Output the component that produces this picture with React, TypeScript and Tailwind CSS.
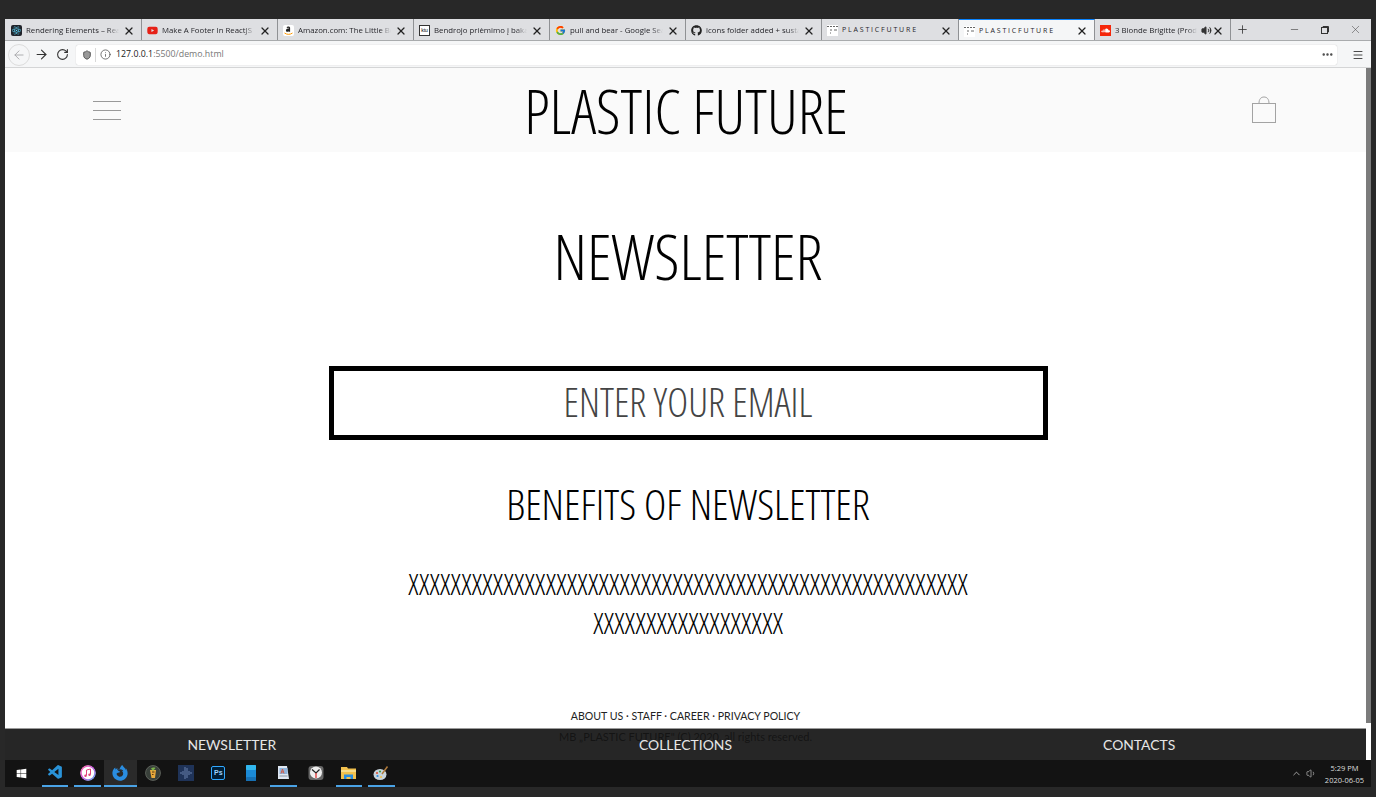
import React from 'react';
import { FaFirefoxBrowser, FaGithub, FaReact, FaSoundcloud, FaWindows, FaYoutube } from 'react-icons/fa';
import { FcGoogle } from 'react-icons/fc';
import { VscVscode } from 'react-icons/vsc';
import { ArrowLeft, ArrowRight, ChevronUp, Ellipsis, Info, Menu, Minus, Plus, RotateCw, Shield, Volume1, Volume2, X } from 'lucide-react';

const narrow = 'font-["Open_Sans",sans-serif] font-light [font-stretch:75%]';

const PlasticIcon = () => (
  <svg width="11" height="11" viewBox="0 0 11 11" className="shrink-0">
    <rect width="11" height="11" fill="#fff" />
    <path d="M0 1.5h2M3 1.5h2M6 1.5h2M9 1.5h2M7 5h3M3 5h2M3 8h1" stroke="#666" strokeWidth="1" />
  </svg>
);

const AmazonIcon = () => (
  <svg width="11" height="11" viewBox="0 0 11 11">
    <rect width="11" height="11" rx="2" fill="#fff" />
    <path d="M3.5 2.2c.5-.9 3.5-1 3.6.6v4h-1.200v-.6c-.8 1-3 .9-3-.8 0-1.500 1.700-1.800 3-1.800 0-1.300-1.300-1.100-1.500-.5z" fill="#222" />
    <path d="M1.500 8c2.500 1.800 5.500 1.800 8 0" stroke="#f90" strokeWidth="1" fill="none" />
  </svg>
);

const MusicIcon = () => (
  <svg width="16" height="16" viewBox="0 0 16 16">
    <defs>
      <linearGradient id="itunes-ring" x1="0" y1="0" x2="1" y2="1">
        <stop offset="0" stopColor="#ff6aa5" />
        <stop offset="0.5" stopColor="#c65be0" />
        <stop offset="1" stopColor="#5aa8f0" />
      </linearGradient>
    </defs>
    <circle cx="8" cy="8" r="7.500" fill="#fff" />
    <circle cx="8" cy="8" r="7" fill="none" stroke="url(#itunes-ring)" strokeWidth="1.500" />
    <path d="M6.500 10.500V5l4-1v5.500" stroke="#e0457b" strokeWidth="1" fill="none" />
    <circle cx="5.500" cy="10.800" r="1.200" fill="#e0457b" />
    <circle cx="9.500" cy="9.800" r="1.200" fill="#e0457b" />
  </svg>
);

const FruityIcon = () => (
  <svg width="16" height="16" viewBox="0 0 16 16">
    <circle cx="8" cy="8" r="7.500" fill="#39403a" stroke="#8a8f86" strokeWidth="0.500" />
    <path d="M5 5h6l-1 8H6.500z" fill="#e8a93c" />
    <path d="M6 3.500c1-1.200 3-1.200 4.500-.5L8 6z" fill="#7bb24a" />
    <path d="M7 7h2.500M7 9.500h1.500" stroke="#5b3a12" strokeWidth="1" />
  </svg>
);

const WaveIcon = () => (
  <svg width="16" height="16" viewBox="0 0 16 16">
    <rect width="16" height="16" fill="#1f3358" />
    <path d="M3 7v2M5 6v4M7 2v12M9 3v10M11 6v4M13 7v2" stroke="#7e97c4" strokeWidth="0.800" />
  </svg>
);

const PhoneIcon = () => (
  <svg width="10" height="16" viewBox="0 0 10 16">
    <rect width="10" height="16" rx="1" fill="#1b8ad6" />
    <rect width="10" height="5" rx="1" fill="#31b7ee" />
    <rect y="12" width="10" height="4" rx="1" fill="#1670b4" />
  </svg>
);

const DocIcon = () => (
  <svg width="13" height="15" viewBox="0 0 13 15">
    <path d="M1 1h9l2 13H1z" fill="#dfe7f2" />
    <rect x="2.500" y="3" width="8" height="6" fill="#8fb4dc" />
    <path d="M4 8.500l1.500-4.500L7 8.500M4.600 7h1.800" stroke="#d9553a" strokeWidth="0.900" fill="none" />
    <path d="M2.500 11h8" stroke="#8c97a6" strokeWidth="1" />
  </svg>
);

const ClockIcon = () => (
  <svg width="16" height="16" viewBox="0 0 16 16">
    <rect x="0.500" y="1" width="15" height="14" rx="3" fill="#676767" />
    <circle cx="8" cy="7.500" r="6" fill="#eee" />
    <path d="M4 4.500L8 8l3.500-3.500" stroke="#222" strokeWidth="1.200" fill="none" />
    <path d="M8 8v5" stroke="#d22" strokeWidth="1.200" />
  </svg>
);

const FolderIcon = () => (
  <svg width="15" height="13" viewBox="0 0 15 13">
    <path d="M0 1h6l1 1.500h8V13H0z" fill="#f2c14e" />
    <rect y="4" width="15" height="2" fill="#f8dc8b" />
    <path d="M3 13V8.500h9V13h-2.500v-2h-4v2z" fill="#2a8de0" />
  </svg>
);

const PaintIcon = () => (
  <svg width="16" height="16" viewBox="0 0 16 16">
    <ellipse cx="7" cy="9.500" rx="6.500" ry="5.500" fill="#c8d4dc" />
    <circle cx="4" cy="8" r="1.100" fill="#d9553a" />
    <circle cx="7" cy="6.500" r="1.100" fill="#3b9e4a" />
    <circle cx="4.500" cy="11" r="1.100" fill="#2a8de0" />
    <circle cx="8" cy="12" r="1.100" fill="#f2c14e" />
    <path d="M9 9l5.500-7.500" stroke="#b07a3c" strokeWidth="1.500" />
  </svg>
);

const tabs = [
  { title: 'Rendering Elements – React', w: 'w-[137px]', icon: <span className="flex h-[11px] w-[11px] items-center justify-center rounded-[2px] bg-[#20232a]"><FaReact className="h-[9px] w-[9px] text-[#61dafb]" /></span> },
  { title: 'Make A Footer In ReactJS | 2', w: 'w-[136px]', icon: <FaYoutube className="h-[11px] w-[11px] text-[#e62117]" /> },
  { title: 'Amazon.com: The Little Book', w: 'w-[136px]', icon: <AmazonIcon /> },
  { title: 'Bendrojo priėmimo į bakalau', w: 'w-[136px]', icon: <span className="h-[11px] w-[11px] border border-[#333] bg-white text-center text-[5px] leading-[9px]">ktu</span> },
  { title: 'pull and bear - Google Sear', w: 'w-[136px]', icon: <FcGoogle className="h-[11px] w-[11px]" /> },
  { title: 'icons folder added + sustain', w: 'w-[136px]', icon: <FaGithub className="h-[11px] w-[11px] text-[#222]" /> },
  { title: 'P L A S T I C F U T U R E', w: 'w-[137px]', icon: <PlasticIcon />, spaced: true },
  { title: 'P L A S T I C F U T U R E', w: 'w-[136px]', icon: <PlasticIcon />, spaced: true, active: true },
  { title: '3 Blonde Brigitte (Produ', w: 'w-[136px]', icon: <span className="flex h-[11px] w-[11px] items-center justify-center bg-[#f5260a]"><FaSoundcloud className="h-[9px] w-[9px] text-white" /></span>, sound: true },
];

const taskIcons = [
  { node: <VscVscode className="h-[17px] w-[17px] text-[#2a93d8]" />, open: true },
  { node: <MusicIcon />, open: true },
  { node: <FaFirefoxBrowser className="h-[16px] w-[16px] text-[#2a8de0]" />, open: true, active: true },
  { node: <FruityIcon /> },
  { node: <WaveIcon /> },
  { node: <span className="flex h-[14px] w-[14px] items-center justify-center rounded-[2px] border border-[#31a8ff] bg-[#001e36] text-[7px] font-bold leading-none text-[#9fd4ff]">Ps</span> },
  { node: <PhoneIcon /> },
  { node: <DocIcon />, open: true },
  { node: <ClockIcon /> },
  { node: <FolderIcon />, open: true },
  { node: <PaintIcon />, open: true },
];

const App: React.FC = () => {
  return (
    <div className="flex h-[797px] w-[1376px] flex-col overflow-hidden bg-[#282828] pl-[5px] pr-[5px] pt-[19px] pb-[10px] font-['Liberation_Sans',sans-serif]">
      {/* tab strip */}
      <div className="flex h-[22px] shrink-0 items-stretch border-b border-[#a9abad] bg-[#dedfe2]">
        {tabs.map((tab, i) => (
          <div
            key={i}
            className={`flex ${tab.w} shrink-0 items-center gap-[4px] border-r border-[#8f9194] pl-[5px] pr-[6px] pt-[2px] first:pl-[6px] ${tab.active ? 'border-t border-t-[#0a84ff] bg-[#f5f6f7]' : ''}`}
          >
            <span className="flex w-[11px] shrink-0 items-center justify-center">{tab.icon}</span>
            <span
              className={`min-w-0 flex-1 overflow-hidden whitespace-nowrap font-['Open_Sans',sans-serif] text-[#26262b] ${tab.spaced ? 'text-[7px] text-[#3b3548]' : 'text-[7.800px] [mask-image:linear-gradient(to_right,black_88%,transparent)]'}`}
            >
              {tab.title}
            </span>
            {tab.sound && <Volume2 className="-mr-[4px] h-[11px] w-[11px] shrink-0 fill-[#333] text-[#333]" />}
            <X className="h-[12px] w-[12px] shrink-0 text-[#222]" strokeWidth={2.5} />
          </div>
        ))}
        <div className="flex w-[23px] items-center justify-center">
          <Plus className="h-[13px] w-[13px] text-[#333]" strokeWidth={1.5} />
        </div>
        <div className="ml-auto flex items-center">
          <span className="flex w-[34px] justify-center"><Minus className="h-[11px] w-[11px] text-[#333]" strokeWidth={1.25} /></span>
          <span className="flex w-[28px] justify-center">
            <svg width="8" height="8" viewBox="0 0 8 8" fill="none" stroke="#333" strokeWidth="1">
              <rect x="0.500" y="1.500" width="6" height="6" />
              <path d="M2 1.500V.5h5.500V6H6.500" />
            </svg>
          </span>
          <span className="flex w-[32px] justify-center"><X className="h-[13px] w-[13px] text-[#444]" strokeWidth={1} /></span>
        </div>
      </div>

      {/* url bar */}
      <div className="flex h-[27px] shrink-0 items-center border-b border-[#d4d5d6] bg-[#f5f6f7] pl-[3px] pr-[7px] pt-px">
        <span className="flex h-[22px] w-[22px] items-center justify-center rounded-full border border-[#dcdcdc]">
          <ArrowLeft className="h-[14px] w-[14px] text-[#a5a5a8]" strokeWidth={1.5} />
        </span>
        <span className="flex w-[22px] justify-center"><ArrowRight className="h-[15px] w-[15px] text-[#333]" strokeWidth={1.75} /></span>
        <span className="flex w-[20px] justify-center"><RotateCw className="h-[13px] w-[13px] text-[#333]" strokeWidth={2} /></span>
        <div className="ml-[4px] flex h-[20px] w-[1261px] items-center rounded-[2px] bg-white pl-[6px] pr-[3px] shadow-[0_0_1px_#b5b5b5]">
          <Shield className="h-[10px] w-[10px] fill-[#999] text-[#444]" strokeWidth={2} />
          <span className="ml-[3px] h-[14px] w-px bg-[#d8d8d8]" />
          <Info className="ml-[4px] h-[11px] w-[11px] text-[#555]" strokeWidth={1.75} />
          <span className="ml-[5px] pt-px font-['Open_Sans',sans-serif] text-[8.800px] text-[#222]">
            127.0.0.1<span className="text-[#777]">:5500/demo.html</span>
          </span>
          <Ellipsis className="ml-auto h-[13px] w-[13px] text-[#444]" strokeWidth={2.5} />
        </div>
        <Menu className="ml-auto h-[12px] w-[12px] text-[#333]" strokeWidth={1.75} />
      </div>

      {/* page */}
      <div className="relative flex min-h-0 flex-1 bg-white">
        <div className="flex min-w-0 flex-1 flex-col items-stretch overflow-hidden">
          <header className="flex h-[84px] shrink-0 items-center justify-between bg-[#fafafa] pl-[88px] pr-[89px]">
            <div className="flex w-[28px] flex-col gap-[8px]">
              <span className="h-px bg-[#999]" />
              <span className="h-px bg-[#999]" />
              <span className="h-px bg-[#999]" />
            </div>
            <h1 className={`text-[61.500px] leading-[84px] text-black ${narrow}`}>PLASTIC FUTURE</h1>
            <svg width="26" height="28" viewBox="0 0 26 28" fill="none" stroke="#a3a3a3" strokeWidth="1">
              <rect x="1.500" y="7.500" width="23" height="19" />
              <path d="M8 7.500C8 3 10 1 13 1s5 2 5 6.500" />
            </svg>
          </header>

          <main className="flex flex-col items-center text-black">
            <div className="flex w-full flex-col items-center pl-[5px]">
              <h2 className={`mt-[62px] text-[63.300px] leading-[84px] ${narrow}`}>NEWSLETTER</h2>
              <div className={`mt-[68px] flex h-[74px] w-[719px] items-center justify-center border-[5px] border-black text-[39.700px] text-[#444] ${narrow}`}>
                ENTER YOUR EMAIL
              </div>
              <h3 className={`mt-[36px] text-[42.400px] leading-[56px] ${narrow}`}>BENEFITS OF NEWSLETTER</h3>
              <p className={`mt-[32px] w-[562px] break-all text-center text-[29.600px] leading-[39px] ${narrow}`}>
                XXXXXXXXXXXXXXXXXXXXXXXXXXXXXXXXXXXXXXXXXXXXXXXXXXXXXXXXXXXXXXXXXXXXXXX
              </p>
            </div>
            <div className="mt-[67px] font-['Lato',sans-serif] text-[10.600px] leading-[15px] text-[#222]">
              ABOUT US · STAFF · CAREER · PRIVACY POLICY
            </div>
            <div className="mt-[5px] font-['Lato',sans-serif] text-[11px] leading-[15px] text-[#222]">
              MB „PLASTIC FUTURE" (C) 2020. all rights reserved.
            </div>
          </main>
        </div>

        {/* scrollbar */}
        <div className="w-[5px] shrink-0 bg-white">
          <div className="h-[655px] bg-[#7b7b7b]" />
        </div>

        {/* fixed bottom nav, sits over the page */}
        <nav className="absolute bottom-0 left-0 right-[5px] grid h-[32px] grid-cols-3 items-center border-t border-[#9a9a9a] bg-[#131313]/[0.92] pt-px font-['Lato',sans-serif] text-[13.900px] text-[#e6e6e6]">
          <span className="text-center">NEWSLETTER</span>
          <span className="text-center">COLLECTIONS</span>
          <span className="text-center">CONTACTS</span>
        </nav>
      </div>

      {/* taskbar */}
      <div className="flex h-[27px] shrink-0 items-stretch bg-[#131313]">
        <span className="flex w-[33.750px] items-center justify-center"><FaWindows className="h-[11px] w-[11px] text-white" /></span>
        {taskIcons.map((t, i) => (
          <span key={i} className={`flex w-[32.650px] items-stretch ${t.active ? 'bg-[#2a2a2a]' : 'px-[3px]'}`}>
            <span className={`flex flex-1 items-center justify-center ${t.open ? 'border-b-2 border-[#4aa3e6]' : 'border-b-2 border-transparent'}`}>
              {t.node}
            </span>
          </span>
        ))}
        <div className="ml-auto flex items-center pr-[7px] text-[#ddd]">
          <ChevronUp className="h-[11px] w-[11px]" strokeWidth={1.5} />
          <Volume1 className="ml-[4px] h-[11px] w-[11px]" strokeWidth={1.25} />
          <div className="ml-[8px] flex flex-col items-center font-['Open_Sans',sans-serif] text-[7.500px] leading-[12px]">
            <span>5:29 PM</span>
            <span>2020-06-05</span>
          </div>
        </div>
      </div>
    </div>
  );
};

export default App;
